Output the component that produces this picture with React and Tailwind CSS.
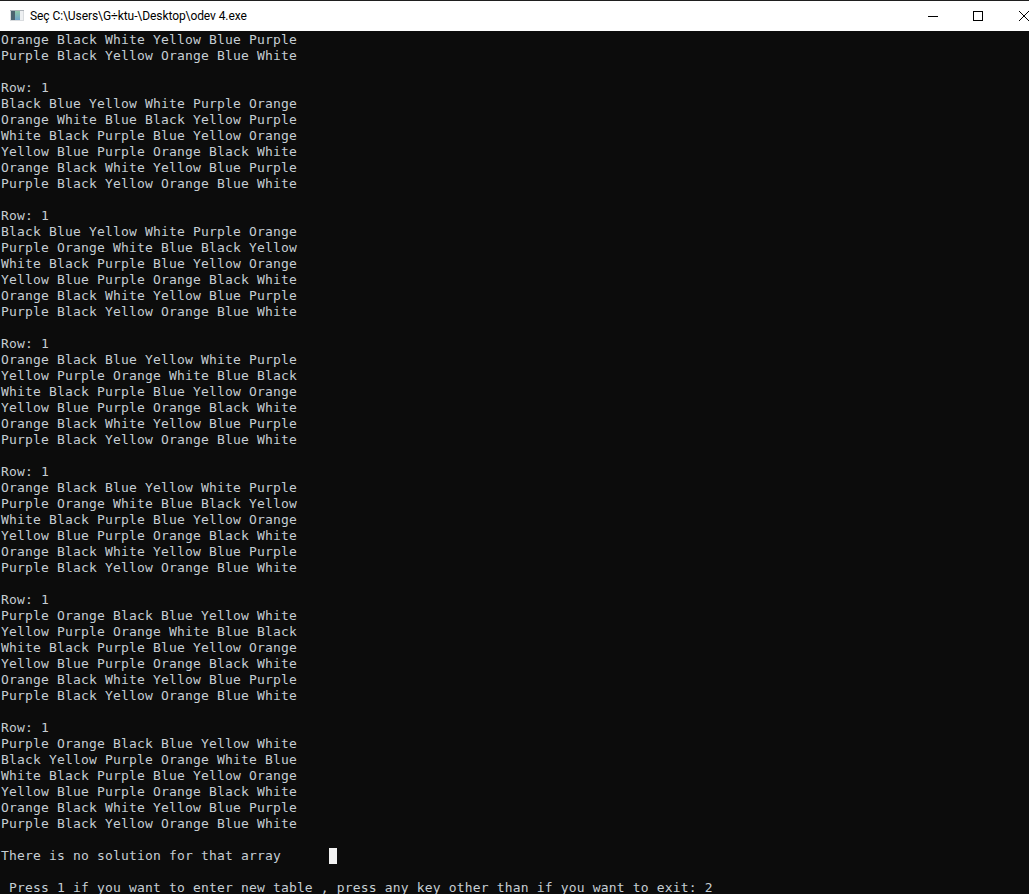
const blocks = [
  ["Orange Black White Yellow Blue Purple", "Purple Black Yellow Orange Blue White"],
  ["Black Blue Yellow White Purple Orange", "Orange White Blue Black Yellow Purple", "White Black Purple Blue Yellow Orange", "Yellow Blue Purple Orange Black White", "Orange Black White Yellow Blue Purple", "Purple Black Yellow Orange Blue White"],
  ["Black Blue Yellow White Purple Orange", "Purple Orange White Blue Black Yellow", "White Black Purple Blue Yellow Orange", "Yellow Blue Purple Orange Black White", "Orange Black White Yellow Blue Purple", "Purple Black Yellow Orange Blue White"],
  ["Orange Black Blue Yellow White Purple", "Yellow Purple Orange White Blue Black", "White Black Purple Blue Yellow Orange", "Yellow Blue Purple Orange Black White", "Orange Black White Yellow Blue Purple", "Purple Black Yellow Orange Blue White"],
  ["Orange Black Blue Yellow White Purple", "Purple Orange White Blue Black Yellow", "White Black Purple Blue Yellow Orange", "Yellow Blue Purple Orange Black White", "Orange Black White Yellow Blue Purple", "Purple Black Yellow Orange Blue White"],
  ["Purple Orange Black Blue Yellow White", "Yellow Purple Orange White Blue Black", "White Black Purple Blue Yellow Orange", "Yellow Blue Purple Orange Black White", "Orange Black White Yellow Blue Purple", "Purple Black Yellow Orange Blue White"],
  ["Purple Orange Black Blue Yellow White", "Black Yellow Purple Orange White Blue", "White Black Purple Blue Yellow Orange", "Yellow Blue Purple Orange Black White", "Orange Black White Yellow Blue Purple", "Purple Black Yellow Orange Blue White"],
];

function Line({ children }) {
  return <div className="h-4 leading-4 whitespace-pre">{children}</div>;
}

function AppIcon() {
  return (
    <svg width="16" height="16" viewBox="0 0 16 16" className="shrink-0">
      <defs>
        <linearGradient id="pane" x1="0" y1="0" x2="0" y2="1">
          <stop offset="0" stopColor="#8fc7a8" />
          <stop offset="1" stopColor="#6fa3c9" />
        </linearGradient>
      </defs>
      <rect x="1" y="2" width="14" height="11" fill="#d9dcdf" />
      <rect x="1" y="2" width="14" height="1" fill="#aeb4ba" />
      <rect x="2" y="3" width="4" height="9" fill="#4d6470" />
      <rect x="6" y="3" width="5" height="9" fill="url(#pane)" />
      <rect x="11" y="3" width="3" height="9" fill="#eef0f2" />
    </svg>
  );
}

export default function App() {
  return (
    <div className="h-[894px] w-[1029px] overflow-hidden flex flex-col bg-[#0c0c0c]">
      <header className="h-[31px] shrink-0 bg-white border-t border-[#1f1f1f] flex items-center pl-[9px] font-['Roboto','Open_Sans',sans-serif] text-[12px] tracking-[-0.08px] text-black overflow-hidden">
        <AppIcon />
        <span className="ml-[5px] whitespace-pre">Seç C:\Users\G÷ktu-\Desktop\odev 4.exe</span>
        <div className="ml-auto mr-[-18px] flex h-full items-center shrink-0">
          <div className="w-[45px] flex justify-center">
            <div className="w-[10px] h-px bg-black" />
          </div>
          <div className="w-[46px] flex justify-center">
            <div className="w-[10px] h-[10px] border border-black" />
          </div>
          <div className="w-[46px] flex justify-center">
            <svg width="10" height="10" viewBox="0 0 10 10">
              <path d="M0 0L10 10M10 0L0 10" stroke="#000" strokeWidth="1" fill="none" />
            </svg>
          </div>
        </div>
      </header>
      <main className="flex-1 min-h-0 pl-px pt-px bg-[#0c0c0c] text-[#c6ced4] font-['DejaVu_Sans_Mono',monospace] text-[13px] tracking-[0.17px]">
        {blocks.map((rows, i) => (
          <div key={i}>
            {i > 0 && <Line>Row: 1</Line>}
            {rows.map((r, j) => (
              <Line key={j}>{r}</Line>
            ))}
            {i < blocks.length - 1 && <Line> </Line>}
          </div>
        ))}
        <Line> </Line>
        <Line>
          {"There is no solution for that array      "}
          <span className="inline-block w-2 h-4 bg-[#f2f2f2] align-top" />
        </Line>
        <Line> </Line>
        <Line>{" Press 1 if you want to enter new table , press any key other than if you want to exit: 2"}</Line>
      </main>
    </div>
  );
}
